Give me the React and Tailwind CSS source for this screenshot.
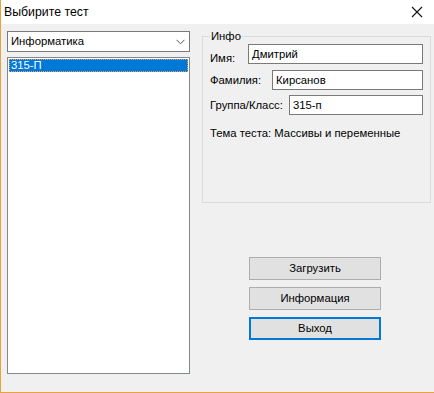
import React from 'react';

const font = { fontFamily: '"Liberation Sans", Arial, sans-serif' };

const TextBox = ({ value, className }) => (
    <div className={`h-[20px] bg-white border border-[#7a7a7a] pl-[3px] flex items-center text-[11.3px] text-black ${className}`}>
        {value}
    </div>
);

const WinButton = ({ label, primary }) => (
    <button
        className={`w-[132px] h-[23px] bg-[#e1e1e1] text-[11.3px] text-black flex items-center justify-center ${
            primary ? 'border-2 border-[#0078d7]' : 'border border-[#adadad]'
        }`}
    >
        {label}
    </button>
);

const App = () => {
    return (
        <div
            className="w-[434px] h-[393px] bg-[#f0f0f0] border-l border-b border-[#e8a33d] flex flex-col overflow-hidden"
            style={font}
        >
            {/* Title bar */}
            <div className="h-[24px] bg-white flex items-center justify-between pl-[3px] pr-[9px] shrink-0">
                <span className="text-[12.3px] text-black leading-none">Выбирите тест</span>
                <svg width="12" height="12" viewBox="0 0 12 12" className="mr-[2px]">
                    <path d="M1 1 L11 11 M11 1 L1 11" stroke="#111" strokeWidth="1.1" fill="none" />
                </svg>
            </div>

            <div className="flex flex-1">
                {/* Left column */}
                <div className="pl-[6px] pt-[7px] flex flex-col">
                    <div className="w-[183px] h-[21px] bg-white border border-[#7a7a7a] flex items-center justify-between pl-[3px] pr-[4px] text-[11.3px] text-black">
                        <span>Информатика</span>
                        <svg width="9" height="6" viewBox="0 0 9 6">
                            <path d="M0.5 0.8 L4.5 4.8 L8.5 0.8" stroke="#555" strokeWidth="1" fill="none" />
                        </svg>
                    </div>
                    <div className="mt-[5px] w-[183px] h-[317px] bg-white border border-[#828790] p-[1px]">
                        <div className="h-[13px] bg-[#0078d7] outline outline-1 outline-dotted outline-[#f0a050] -outline-offset-1 text-white text-[11.3px] leading-[13px] pl-[2px]">
                            315-П
                        </div>
                    </div>
                </div>

                {/* Right column */}
                <div className="flex flex-col pl-[12px]">
                    <fieldset className="mt-[5px] w-[227px] h-[174px] border border-[#dcdcdc] px-[7px] pb-[4px]">
                        <legend className="text-[11.3px] text-black px-[1px] leading-[14px]">Инфо</legend>
                        <div className="flex items-end mt-[1px]">
                            <span className="w-[38px] text-[11.3px] text-black leading-[14px] mb-[-1px]">Имя:</span>
                            <TextBox value="Дмитрий" className="w-[175px]" />
                        </div>
                        <div className="flex items-center mt-[6px]">
                            <span className="w-[62px] text-[11.3px] text-black">Фамилия:</span>
                            <TextBox value="Кирсанов" className="w-[151px]" />
                        </div>
                        <div className="flex items-center mt-[5px]">
                            <span className="w-[79px] text-[11.3px] text-black">Группа/Класс:</span>
                            <TextBox value="315-п" className="w-[134px]" />
                        </div>
                        <div className="mt-[11px] text-[11.3px] text-black leading-[14px]">
                            Тема теста: Массивы и переменные
                        </div>
                    </fieldset>

                    <div className="flex flex-col gap-[7px] ml-[47px] mt-[54px]">
                        <WinButton label="Загрузить" />
                        <WinButton label="Информация" />
                        <WinButton label="Выход" primary />
                    </div>
                </div>
            </div>
        </div>
    );
};

export default App;
